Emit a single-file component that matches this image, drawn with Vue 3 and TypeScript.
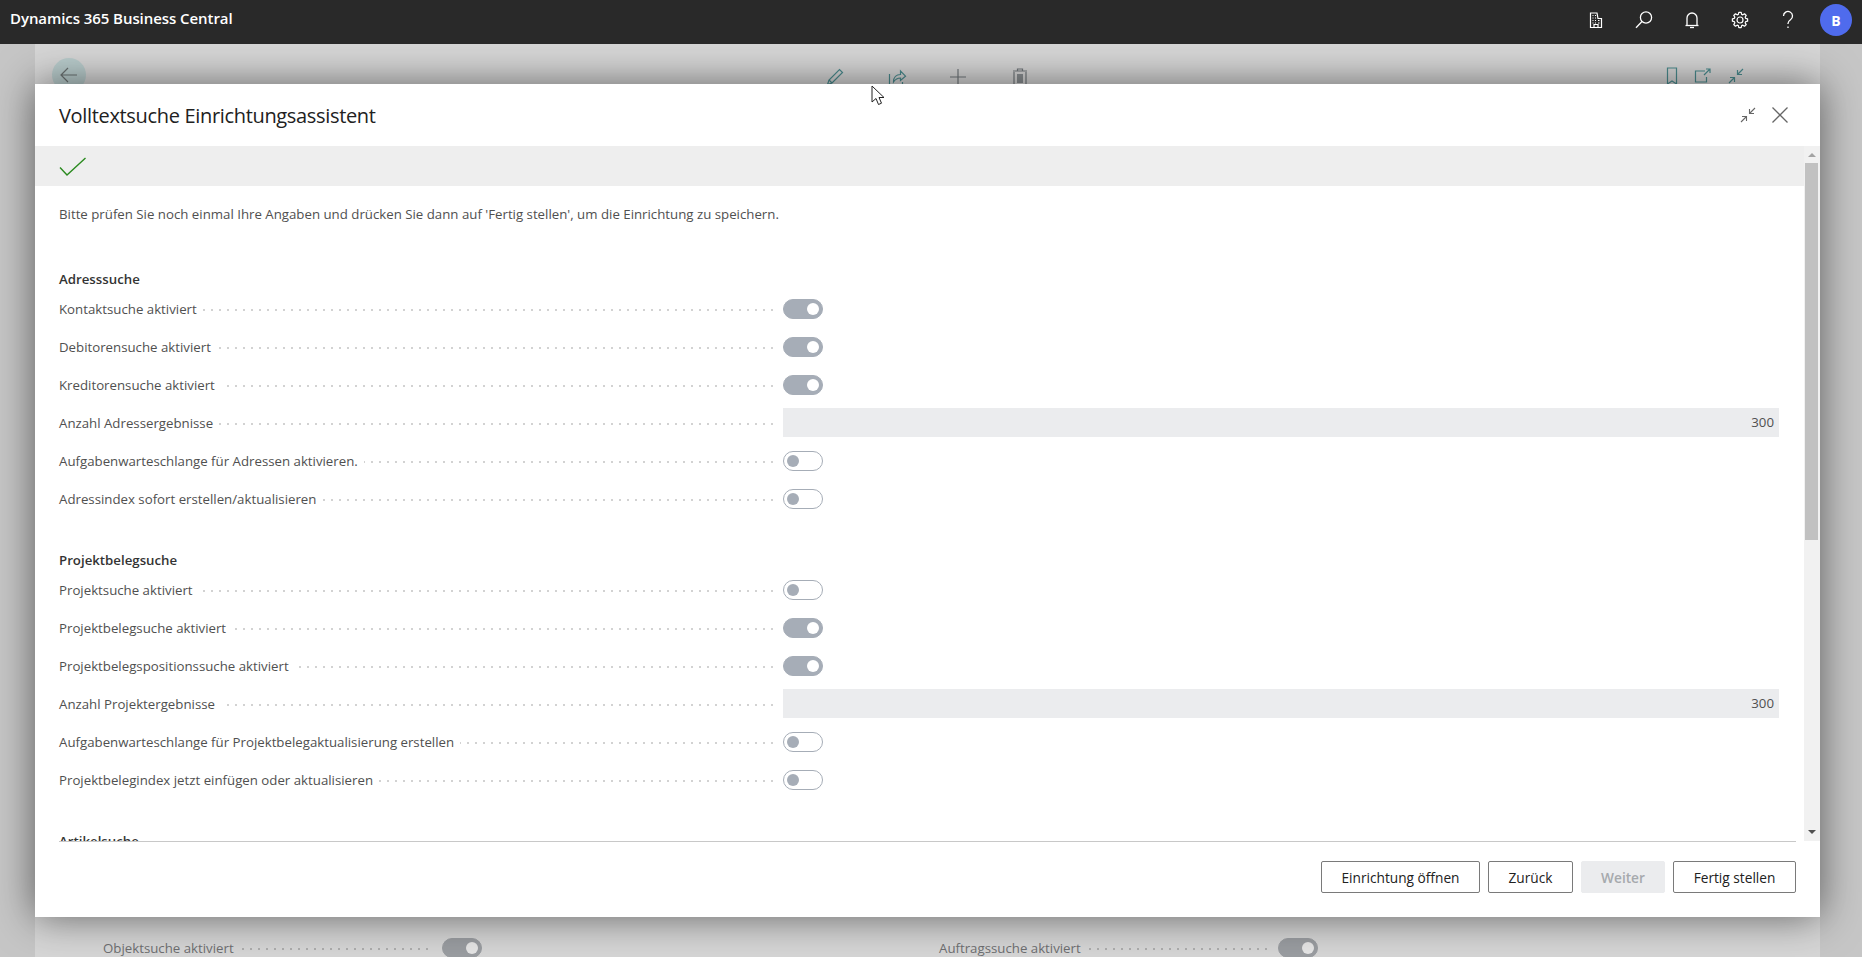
<script setup lang="ts">
interface Row { label: string; on?: boolean; value?: string }
interface Section { title: string; rows: Row[] }

const sections: Section[] = [
  {
    title: 'Adresssuche',
    rows: [
      { label: 'Kontaktsuche aktiviert', on: true },
      { label: 'Debitorensuche aktiviert', on: true },
      { label: 'Kreditorensuche aktiviert', on: true },
      { label: 'Anzahl Adressergebnisse', value: '300' },
      { label: 'Aufgabenwarteschlange für Adressen aktivieren.', on: false },
      { label: 'Adressindex sofort erstellen/aktualisieren', on: false },
    ],
  },
  {
    title: 'Projektbelegsuche',
    rows: [
      { label: 'Projektsuche aktiviert', on: false },
      { label: 'Projektbelegsuche aktiviert', on: true },
      { label: 'Projektbelegspositionssuche aktiviert', on: true },
      { label: 'Anzahl Projektergebnisse', value: '300' },
      { label: 'Aufgabenwarteschlange für Projektbelegaktualisierung erstellen', on: false },
      { label: 'Projektbelegindex jetzt einfügen oder aktualisieren', on: false },
    ],
  },
  { title: 'Artikelsuche', rows: [] },
]

function gearPath(): string {
  const teeth = 8
  const pts: string[] = []
  for (let i = 0; i < teeth; i++) {
    const a = (i / teeth) * Math.PI * 2
    const step = (Math.PI * 2) / teeth
    const spots: [number, number][] = [
      [a - step * 0.36, 5.9],
      [a - step * 0.2, 7.7],
      [a + step * 0.2, 7.7],
      [a + step * 0.36, 5.9],
    ]
    for (const [t, r] of spots) {
      pts.push(`${(10 + r * Math.cos(t)).toFixed(2)} ${(10 + r * Math.sin(t)).toFixed(2)}`)
    }
  }
  return 'M' + pts.join('L') + 'Z'
}
const gear = gearPath()
</script>

<template>
  <div class="screen">
    <header class="topbar">
      <span class="brand">Dynamics 365 Business Central</span>
      <nav class="top-actions">
        <button class="top-btn" aria-label="Unternehmen">
          <svg width="20" height="20" viewBox="0 0 20 20" fill="none" stroke="#fff" stroke-width="1.2">
            <path d="M4.5 17.5V3h6.5l1 5.500h3.500v9z" />
            <path d="M8 17.500v-3h4v3" />
            <path d="M6.500 5.500h1M9 5.500h1M6.500 8h1M9 8h1M6.500 10.500h1M9 10.500h1M12 10.500h1.500M6.500 13h1M9 13h1M12 13h1.500" stroke-width="1" />
          </svg>
        </button>
        <button class="top-btn" aria-label="Suchen">
          <svg width="20" height="20" viewBox="0 0 20 20" fill="none" stroke="#fff" stroke-width="1.3">
            <circle cx="12" cy="7.5" r="5.600" />
            <path d="M8 11.500 2 17.800" />
          </svg>
        </button>
        <button class="top-btn" aria-label="Benachrichtigungen">
          <svg width="20" height="20" viewBox="0 0 20 20" fill="none" stroke="#fff" stroke-width="1.3">
            <path d="M5 15.500V8a5 5 0 0 1 10 0v7.500" />
            <path d="M3.500 15.500h13" />
            <path d="M8 17.500h4" />
          </svg>
        </button>
        <button class="top-btn" aria-label="Einstellungen">
          <svg width="20" height="20" viewBox="0 0 20 20" fill="none" stroke="#fff" stroke-width="1.2">
            <path :d="gear" stroke-linejoin="round" />
            <circle cx="10" cy="10" r="3" />
          </svg>
        </button>
        <button class="top-btn" aria-label="Hilfe">
          <svg width="20" height="20" viewBox="0 0 20 20" fill="none" stroke="#fff" stroke-width="1.3">
            <path d="M5.500 6a4.500 4.500 0 1 1 7 3.700c-1.500 1-2.500 1.800-2.500 3.800v.5" />
            <path d="M10 16.500v1.600" />
          </svg>
        </button>
        <button class="top-btn" aria-label="Konto"><span class="avatar">B</span></button>
      </nav>
    </header>

    <div class="backdrop">
      <section class="page-card">
        <div class="page-toolbar">
          <span class="back">
            <svg width="20" height="20" viewBox="0 0 20 20" fill="none" stroke="#6b7272" stroke-width="1.2">
              <path d="M18 10H2M9 3l-7 7 7 7" />
            </svg>
          </span>
          <div class="page-tools">
            <svg width="20" height="20" viewBox="0 0 20 20" fill="none" stroke="#4a8b8e" stroke-width="1.2">
              <path d="M2.500 17.500 4 13 14.500 2.500l3 3L7 16z" />
              <path d="M4 13l3 3" />
            </svg>
            <svg width="20" height="20" viewBox="0 0 20 20" fill="none" stroke="#4a8b8e" stroke-width="1.2">
              <path d="M2.500 7v11h13v-3" />
              <path d="M6.500 15c0-5 3-7.500 7-7.500V4l5 5.200-5 4.300V11c-3 0-5 1-7 4z" />
            </svg>
            <svg width="20" height="20" viewBox="0 0 20 20" fill="none" stroke="#72787c" stroke-width="1.200">
              <path d="M10 2v16M2 10h16" />
            </svg>
            <svg width="20" height="20" viewBox="0 0 20 20" fill="none" stroke="#72787c" stroke-width="1.200">
              <path d="M4 5v13h12V5M3 4h14M7.500 4V2h5v2" />
              <rect x="7" y="7" width="6" height="9" fill="#8a8f92" stroke="none" />
            </svg>
          </div>
          <div class="page-tools-right">
            <svg width="16" height="20" viewBox="0 0 16 20" fill="none" stroke="#4a8b8e" stroke-width="1.200">
              <path d="M3.500 2h9v16l-4.500-3-4.500 3z" />
            </svg>
            <svg width="20" height="20" viewBox="0 0 20 20" fill="none" stroke="#4a8b8e" stroke-width="1.200">
              <path d="M12 5H2.500v11h11V11" />
              <path d="M11 9l6-6M13 3h4v4" />
            </svg>
            <svg width="20" height="20" viewBox="0 0 20 20" fill="none" stroke="#4a8b8e" stroke-width="1.200">
              <path d="M17 3l-5.500 5.500M11.500 4v4.500H16M3 17l5.500-5.500M8.500 16v-4.500H4" />
            </svg>
          </div>
        </div>
        <div class="page-fields">
          <div class="page-field">
            <span>Objektsuche aktiviert</span><i class="leader"></i><span class="toggle on dim"></span>
          </div>
          <div class="page-field">
            <span>Auftragssuche aktiviert</span><i class="leader"></i><span class="toggle on dim"></span>
          </div>
        </div>
      </section>
    </div>

    <div class="modal">
      <div class="modal-head">
        <h1>Volltextsuche Einrichtungsassistent</h1>
        <div class="modal-actions">
          <svg width="18" height="18" viewBox="0 0 18 18" fill="none" stroke="#666" stroke-width="1.100">
            <path d="M16 2l-5.500 5.500M10.500 3v4.500H15M2 16l5.500-5.500M7.500 15v-4.500H3" />
          </svg>
          <svg width="18" height="18" viewBox="0 0 18 18" fill="none" stroke="#666" stroke-width="1.300">
            <path d="M1.500 1.500l15 15M16.500 1.500l-15 15" />
          </svg>
        </div>
      </div>

      <div class="modal-main">
        <div class="scroll-content">
          <div class="status-bar">
            <svg width="28" height="20" viewBox="0 0 28 20" fill="none" stroke="#2a8a1f" stroke-width="1.400">
              <path d="M1 10.500 8 18 26.500 1" />
            </svg>
          </div>
          <div class="form">
            <p class="intro">Bitte prüfen Sie noch einmal Ihre Angaben und drücken Sie dann auf 'Fertig stellen', um die Einrichtung zu speichern.</p>
            <section v-for="s in sections" :key="s.title" class="group">
              <h2>{{ s.title }}</h2>
              <div v-for="r in s.rows" :key="r.label" class="row">
                <div class="label-cell">
                  <span class="label">{{ r.label }}</span>
                </div>
                <div v-if="r.value" class="input">{{ r.value }}</div>
                <span v-else class="toggle" :class="{ on: r.on }"></span>
              </div>
            </section>
          </div>
        </div>
        <div class="scrollbar">
          <i class="arrow up"></i>
          <div class="track"><div class="thumb"></div></div>
          <i class="arrow down"></i>
        </div>
      </div>

      <footer class="modal-foot">
        <button class="btn w1">Einrichtung öffnen</button>
        <button class="btn w2">Zurück</button>
        <button class="btn w3" disabled>Weiter</button>
        <button class="btn w4">Fertig stellen</button>
      </footer>
    </div>

    <svg class="cursor" width="14" height="21" viewBox="0 0 14 21">
      <path d="M1 1v16l4-3.500 2.500 6 3-1.300-2.500-5.700h5z" fill="#fff" stroke="#222" stroke-width="1" />
    </svg>
  </div>
</template>

<style>
html, body { margin: 0; background: #c8c8c8; }
</style>

<style scoped>
.screen {
  position: relative;
  width: 1862px;
  height: 957px;
  overflow: hidden;
  display: flex;
  flex-direction: column;
  font-family: "Open Sans", "Noto Sans", sans-serif;
  font-size: 13.25px;
  color: #505050;
}
.topbar {
  height: 44px;
  flex: none;
  background: #292929;
  display: flex;
  align-items: center;
  justify-content: space-between;
  padding: 0 2px 0 10px;
  position: relative;
  z-index: 3;
}
.brand { color: #fff; font-size: 15px; font-weight: 600; letter-spacing: -0.07px; margin-top: -8px; }
.top-actions { display: flex; margin-top: -4px; }
.top-btn {
  width: 48px;
  height: 40px;
  padding: 0;
  border: 0;
  background: none;
  display: flex;
  align-items: center;
  justify-content: center;
}
.avatar {
  width: 32px;
  height: 32px;
  border-radius: 50%;
  background: #4f6bed;
  color: #fff;
  font: 700 14px "Open Sans", sans-serif;
  display: flex;
  align-items: center;
  justify-content: center;
}
.backdrop {
  flex: 1;
  padding: 0 42px 0 35px;
  background: #c6c6c6;
  display: flex;
  min-height: 0;
}
.page-card {
  flex: 1;
  background: #d6d6d6;
  display: flex;
  flex-direction: column;
  justify-content: space-between;
  color: #6e6f71;
}
.page-toolbar {
  display: flex;
  align-items: center;
  height: 40px;
  margin-top: 14px;
  padding-left: 17px;
}
.back {
  width: 34px;
  height: 34px;
  border-radius: 50%;
  background: #b9cccc;
  display: flex;
  align-items: center;
  justify-content: center;
  margin-top: -6px;
}
.page-tools {
  display: flex;
  gap: 41.500px;
  margin-left: 739px;
  margin-top: -2px;
}
.page-tools-right {
  display: flex;
  gap: 13px;
  margin-left: 634.500px;
  align-items: center;
  margin-top: -4px;
}
.page-fields {
  display: flex;
  gap: 457px;
  padding-left: 68px;
  margin-bottom: -1px;
}
.page-field { width: 379px; display: flex; align-items: center; }
.modal {
  position: absolute;
  left: 35px;
  top: 84px;
  width: 1785px;
  height: 833px;
  background: #fff;
  box-shadow: 0 0 38px rgba(0, 0, 0, 0.55);
  display: flex;
  flex-direction: column;
  z-index: 2;
}
.modal-head {
  height: 62px;
  flex: none;
  display: flex;
  align-items: center;
  justify-content: space-between;
  padding: 1px 31px 0 24px;
  box-sizing: border-box;
}
.modal-head h1 {
  margin: 0;
  font-size: 20px;
  font-weight: 400;
  letter-spacing: -0.33px;
  color: #212121;
}
.modal-actions { display: flex; gap: 14px; align-items: center; margin-top: -1px; }
.modal-main { flex: 1; min-height: 0; display: flex; }
.scroll-content { flex: 1; min-width: 0; overflow: hidden; }
.status-bar {
  height: 40px;
  box-sizing: border-box;
  background: #eeeeee;
  display: flex;
  align-items: center;
  padding: 2px 0 0 24px;
}
.form { padding: 18px 24px 0; }
.intro { margin: 0 0 45px; line-height: 20px; color: #505050; }
.group { margin-bottom: 32px; }
.group h2 {
  margin: 0 0 1px;
  font-size: 13.25px;
  line-height: 20px;
  font-weight: 600;
  color: #333;
}
.row {
  height: 38px;
  display: grid;
  grid-template-columns: 716px 1fr;
  column-gap: 8px;
  align-items: center;
}
.label-cell {
  align-self: stretch;
  display: flex;
  align-items: center;
  background-image: linear-gradient(90deg, #d2d2d2 2px, transparent 2px);
  background-size: 8px 2px;
  background-repeat: repeat-x;
  background-position: 0 19px;
}
.label { background: #fff; padding-right: 6px; }
.leader {
  flex: 1;
  height: 2px;
  margin: 1px 8px 0 8px;
  background-image: linear-gradient(90deg, #adadad 2px, transparent 2px);
  background-size: 8px 2px;
  background-repeat: repeat-x;
}
.input {
  height: 29px;
  margin-right: 1px;
  background: #ebecee;
  display: flex;
  align-items: center;
  justify-content: flex-end;
  padding-right: 5px;
  color: #505050;
  position: relative;
  top: -1px;
}
.toggle {
  position: relative;
  display: block;
  width: 40px;
  height: 20px;
  box-sizing: border-box;
  border-radius: 10px;
  border: 1px solid #a6adb7;
  background: #fff;
  flex: none;
}
.toggle::after {
  content: "";
  position: absolute;
  top: 3px;
  left: 3px;
  width: 12px;
  height: 12px;
  border-radius: 50%;
  background: #a6adb7;
}
.toggle.on { background: #a6adb7; }
.toggle.on::after { left: auto; right: 3px; background: #fff; }
.toggle.dim { background: #9a9da1; border-color: #9a9da1; }
.toggle.dim::after { background: #e6e6e6; }
.scrollbar {
  width: 16px;
  flex: none;
  background: #f1f1f1;
  display: flex;
  flex-direction: column;
  align-items: center;
}
.arrow { display: block; width: 0; height: 0; border-left: 4px solid transparent; border-right: 4px solid transparent; flex: none; }
.arrow.up { border-bottom: 4px solid #a3a3a3; margin: 7px 0 6px; }
.arrow.down { border-top: 4px solid #505050; margin: 7px 0 7px; }
.track { flex: 1; width: 100%; }
.thumb { width: 13px; height: 377px; margin-left: 1px; background: #c1c1c1; }
.modal-foot {
  flex: none;
  height: 76px;
  box-sizing: border-box;
  margin: 0 24px;
  border-top: 1px solid #c8c8c8;
  padding-top: 19px;
  display: flex;
  justify-content: flex-end;
  gap: 8px;
}
.btn {
  height: 32px;
  box-sizing: border-box;
  background: #fff;
  border: 1px solid #7a7a7a;
  border-radius: 2px;
  font: inherit;
  font-size: 13.7px;
  color: #212121;
  padding: 0;
}
.btn:disabled { background: #ebecee; border-color: #ebecee; color: #a6a9ad; font-weight: 600; }
.w1 { width: 159px; }
.w2 { width: 85px; }
.w3 { width: 84px; }
.w4 { width: 123px; }
.cursor { position: absolute; left: 871px; top: 85px; z-index: 4; }
</style>
